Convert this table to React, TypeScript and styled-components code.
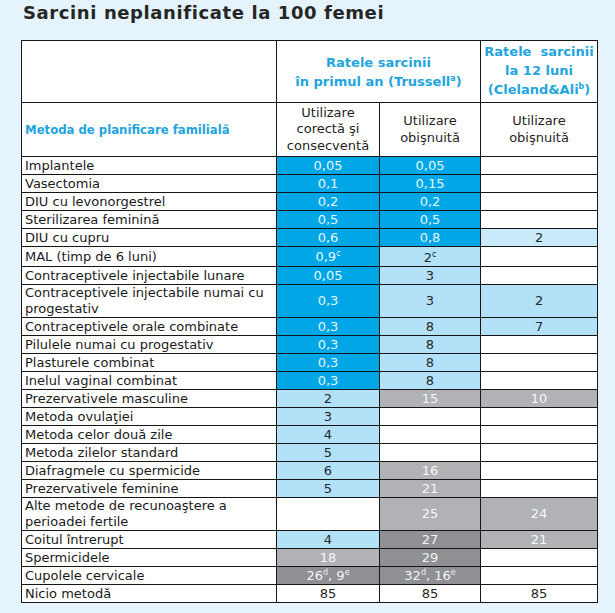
import React from "react";
import styled, { createGlobalStyle, css } from "styled-components";

const GlobalStyle = createGlobalStyle`
  html, body { margin: 0; padding: 0; background: #e4f3fc; }
  body { font-family: "DejaVu Sans", "Noto Sans", sans-serif; }
`;

type Tone = "dark" | "light" | "pale" | "white" | "gray" | "deep";

const toneBg: Record<Tone, string> = {
  dark: "#00a6e6",
  light: "#b2e1f8",
  pale: "#c9eafa",
  white: "#ffffff",
  gray: "#b1b2b5",
  deep: "#8f9094",
};
const toneFg: Record<Tone, string> = {
  dark: "#e4f7ff",
  light: "#1f2a30",
  pale: "#1f2a30",
  white: "#1f1f1f",
  gray: "#f7f7f7",
  deep: "#f4f4f4",
};

const Page = styled.div`
  width: 615px;
  height: 613px;
  box-sizing: border-box;
  padding: 0 0 0 21px;
  background: #e4f3fc;
  overflow: hidden;
`;

const Title = styled.h1`
  margin: 0 0 14px 2px;
  font-family: "DejaVu Sans", sans-serif;
  font-weight: bold;
  font-size: 18px;
  line-height: 26px;
  letter-spacing: 0.6px;
  color: #262626;
`;

const Table = styled.table`
  border-collapse: separate;
  border-spacing: 0;
  table-layout: fixed;
  width: 576px;
  background: #fff;
  border-left: 1px solid #161616;
  border-top: 1px solid #161616;
`;

const cellBase = css`
  box-sizing: border-box;
  padding: 0;
  border-right: 1px solid #161616;
  border-bottom: 1px solid #161616;
  vertical-align: middle;
`;

const HeadCell = styled.th<{ $h: number; $pb?: number }>`
  ${cellBase};
  height: ${(p) => p.$h}px;
  padding-bottom: ${(p) => p.$pb ?? 0}px;
  background: #fff;
  text-align: center;
  font-weight: bold;
  font-size: 13px;
  line-height: 19px;
  color: #22a5de;
`;

const MethodHead = styled.th<{ $h: number }>`
  ${cellBase};
  height: ${(p) => p.$h}px;
  padding-left: 3px;
  background: #fff;
  text-align: left;
  font-weight: bold;
  font-size: 11.7px;
  color: #22a5de;
`;

const UseHead = styled.th`
  ${cellBase};
  background: #fff;
  text-align: center;
  font-weight: normal;
  font-size: 13px;
  line-height: 16.5px;
  color: #1f1f1f;
`;

const Label = styled.td<{ $h: number }>`
  ${cellBase};
  height: ${(p) => p.$h}px;
  padding-left: 3px;
  background: #fff;
  font-size: 13px;
  line-height: 16px;
  color: #1a1a1a;
  white-space: nowrap;
`;

const Value = styled.td<{ $tone: Tone; $drop?: boolean }>`
  ${cellBase};
  background: ${(p) => toneBg[p.$tone]};
  color: ${(p) => toneFg[p.$tone]};
  text-align: center;
  font-size: 13px;
  line-height: 16px;
  padding-top: ${(p) => (p.$drop ? 3 : 0)}px;
`;

const Sup = styled.sup`
  font-size: 8px;
  line-height: 0;
  vertical-align: 5px;
`;

type Cell = { v?: React.ReactNode; t: Tone; drop?: boolean };
type Row = { label: React.ReactNode; cells: [Cell, Cell, Cell]; h?: number };

const W: Cell = { t: "white" };

const rows: Row[] = [
  { label: "Implantele", cells: [{ v: "0,05", t: "dark" }, { v: "0,05", t: "dark" }, W] },
  { label: "Vasectomia", cells: [{ v: "0,1", t: "dark" }, { v: "0,15", t: "dark" }, W] },
  { label: "DIU cu levonorgestrel", cells: [{ v: "0,2", t: "dark" }, { v: "0,2", t: "dark" }, W] },
  { label: "Sterilizarea feminină", cells: [{ v: "0,5", t: "dark" }, { v: "0,5", t: "dark" }, W] },
  { label: "DIU cu cupru", cells: [{ v: "0,6", t: "dark" }, { v: "0,8", t: "dark" }, { v: "2", t: "pale" }] },
  {
    label: "MAL (timp de 6 luni)",
    cells: [
      { v: <>0,9<Sup>c</Sup></>, t: "dark" },
      { v: <>2<Sup>c</Sup></>, t: "light", drop: true },
      W,
    ],
  },
  { label: "Contraceptivele injectabile lunare", cells: [{ v: "0,05", t: "dark" }, { v: "3", t: "light" }, W] },
  {
    label: <>Contraceptivele injectabile numai cu<br />progestativ</>,
    h: 32,
    cells: [{ v: "0,3", t: "dark" }, { v: "3", t: "light" }, { v: "2", t: "light" }],
  },
  { label: "Contraceptivele orale combinate", cells: [{ v: "0,3", t: "dark" }, { v: "8", t: "light" }, { v: "7", t: "light" }] },
  { label: "Pilulele numai cu progestativ", cells: [{ v: "0,3", t: "dark" }, { v: "8", t: "light" }, W] },
  { label: "Plasturele combinat", cells: [{ v: "0,3", t: "dark" }, { v: "8", t: "light" }, W] },
  { label: "Inelul vaginal combinat", cells: [{ v: "0,3", t: "dark" }, { v: "8", t: "light" }, W] },
  { label: "Prezervativele masculine", cells: [{ v: "2", t: "light" }, { v: "15", t: "gray" }, { v: "10", t: "gray" }] },
  { label: "Metoda ovulaţiei", cells: [{ v: "3", t: "light" }, W, W] },
  { label: "Metoda celor două zile", cells: [{ v: "4", t: "light" }, W, W] },
  { label: "Metoda zilelor standard", cells: [{ v: "5", t: "light" }, W, W] },
  { label: "Diafragmele cu spermicide", cells: [{ v: "6", t: "light" }, { v: "16", t: "gray" }, W] },
  { label: "Prezervativele feminine", cells: [{ v: "5", t: "light" }, { v: "21", t: "gray" }, W] },
  {
    label: <>Alte metode de recunoaştere a<br />perioadei fertile</>,
    h: 33,
    cells: [W, { v: "25", t: "gray" }, { v: "24", t: "gray" }],
  },
  { label: "Coitul întrerupt", cells: [{ v: "4", t: "light" }, { v: "27", t: "deep" }, { v: "21", t: "gray" }] },
  { label: "Spermicidele", cells: [{ v: "18", t: "gray" }, { v: "29", t: "deep" }, W] },
  {
    label: "Cupolele cervicale",
    cells: [
      { v: <>26<Sup>d</Sup>, 9<Sup>e</Sup></>, t: "deep" },
      { v: <>32<Sup>d</Sup>, 16<Sup>e</Sup></>, t: "deep" },
      W,
    ],
  },
  { label: "Nicio metodă", cells: [{ v: "85", t: "white" }, { v: "85", t: "white" }, { v: "85", t: "white" }] },
];

export default function App() {
  return (
    <Page>
      <GlobalStyle />
      <Title>Sarcini neplanificate la 100 femei</Title>
      <Table>
        <colgroup>
          <col style={{ width: 255 }} />
          <col style={{ width: 103 }} />
          <col style={{ width: 101 }} />
          <col style={{ width: 117 }} />
        </colgroup>
        <thead>
          <tr>
            <HeadCell $h={62} />
            <HeadCell $h={62} colSpan={2}>
              Ratele sarcinii
              <br />
              în primul an (Trussell<Sup>a</Sup>)
            </HeadCell>
            <HeadCell $h={62} $pb={3}>
              Ratele&nbsp; sarcinii
              <br />
              la 12 luni
              <br />
              (Cleland&amp;Ali<Sup>b</Sup>)
            </HeadCell>
          </tr>
          <tr>
            <MethodHead $h={54}>Metoda de planificare familială</MethodHead>
            <UseHead>
              Utilizare
              <br />
              corectă şi
              <br />
              consecventă
            </UseHead>
            <UseHead>
              Utilizare
              <br />
              obişnuită
            </UseHead>
            <UseHead>
              Utilizare
              <br />
              obişnuită
            </UseHead>
          </tr>
        </thead>
        <tbody>
          {rows.map((r, i) => (
            <tr key={i}>
              <Label $h={r.h ?? 18}>{r.label}</Label>
              {r.cells.map((c, j) => (
                <Value key={j} $tone={c.t} $drop={c.drop}>
                  {c.v}
                </Value>
              ))}
            </tr>
          ))}
        </tbody>
      </Table>
    </Page>
  );
}
